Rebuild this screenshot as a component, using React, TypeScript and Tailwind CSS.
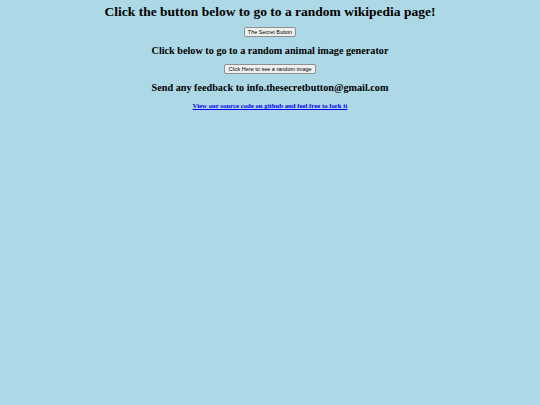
export default function App() {
  return (
    <div className="min-h-[405px] w-full bg-[#add8e6] flex flex-col items-center text-black font-['Liberation_Serif',serif]">
      <h1 className="mt-[4px] text-[13.5px] leading-[16px] font-bold">
        Click the button below to go to a random wikipedia page!
      </h1>
      <button className="mt-[7px] h-[10px] px-[3px] bg-[#f0f0f0] border border-[#8f8f8f] rounded-[2px] text-[5.5px] leading-[8px] font-['Liberation_Sans',sans-serif]">
        The Secret Button
      </button>
      <h2 className="mt-[8px] text-[10.2px] leading-[12px] font-bold">
        Click below to go to a random animal image generator
      </h2>
      <button className="mt-[7px] h-[10px] px-[3px] bg-[#f0f0f0] border border-[#8f8f8f] rounded-[2px] text-[5.5px] leading-[8px] font-['Liberation_Sans',sans-serif]">
        Click Here to see a random image
      </button>
      <h2 className="mt-[8px] text-[10.2px] leading-[12px] font-bold">
        Send any feedback to info.thesecretbutton@gmail.com
      </h2>
      <a
        href="#"
        className="mt-[8px] text-[6.75px] leading-[8px] font-bold text-[#0000ee] underline"
      >
        View our source code on github and feel free to fork it
      </a>
    </div>
  );
}
